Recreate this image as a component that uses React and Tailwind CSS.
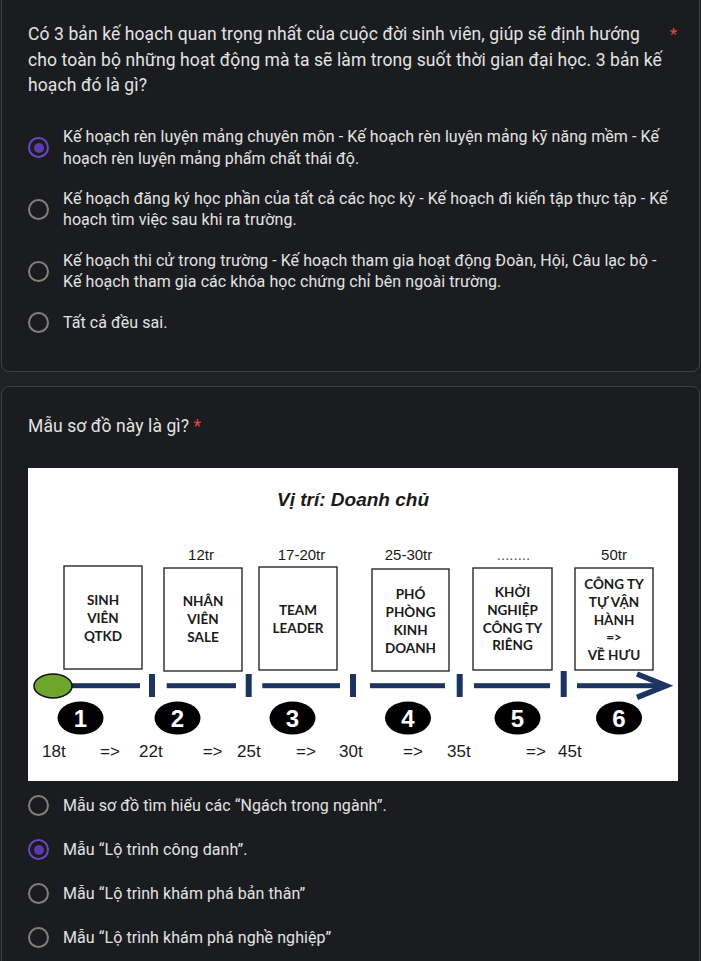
import React from "react";

function Radio({ checked }) {
  if (checked) {
    return (
      <div className="w-[21px] h-[21px] shrink-0 rounded-full border-2 border-[#6b47c2] flex items-center justify-center">
        <div className="w-[10px] h-[10px] rounded-full bg-[#5c3ca9]" />
      </div>
    );
  }
  return <div className="w-[21px] h-[21px] shrink-0 rounded-full border-2 border-[#857f79]" />;
}

const boxes = [
  { x: 36, y: 98, w: 78, h: 103, lines: ["SINH", "VIÊN", "QTKD"], ys: [137, 155, 173] },
  { x: 136, y: 100, w: 78, h: 103, lines: ["NHÂN", "VIÊN", "SALE"], ys: [138, 156, 174] },
  { x: 231, y: 99, w: 78, h: 103, lines: ["TEAM", "LEADER"], ys: [147, 165] },
  { x: 344, y: 101, w: 77, h: 102, lines: ["PHÓ", "PHÒNG", "KINH", "DOANH"], ys: [131, 149, 167, 185] },
  { x: 445, y: 100, w: 79, h: 102, lines: ["KHỞI", "NGHIỆP", "CÔNG TY", "RIÊNG"], ys: [129, 147, 165, 182] },
  { x: 547, y: 100, w: 78, h: 102, lines: ["CÔNG TY", "TỰ VẬN", "HÀNH", "=>", "VỀ HƯU"], ys: [121, 139, 157, 174, 192] },
];

const topLabels = [
  { x: 173, t: "12tr" },
  { x: 273.5, t: "17-20tr" },
  { x: 380.5, t: "25-30tr" },
  { x: 485.5, t: "........" },
  { x: 586, t: "50tr" },
];

const segs = [
  [42, 112],
  [138.7, 208],
  [234.3, 312],
  [342, 417],
  [446, 522],
  [549, 633],
];

const ticks = [121, 217.7, 322, 428.7, 532.7];

const nums = [52.5, 149.5, 264.5, 380, 489.5, 591];

const ages = [
  [14, "18t"],
  [72, "=>"],
  [111, "22t"],
  [174.7, "=>"],
  [209, "25t"],
  [268, "=>"],
  [311, "30t"],
  [375, "=>"],
  [419, "35t"],
  [498, "=>"],
  [530, "45t"],
];

function Diagram() {
  return (
    <svg width="650" height="313" viewBox="0 0 650 313" className="block">
      <rect x="0" y="0" width="650" height="313" fill="#ffffff" />
      <text
        x="325"
        y="38"
        textAnchor="middle"
        fontFamily="'Liberation Sans', Arial, sans-serif"
        fontWeight="700"
        fontStyle="italic"
        fontSize="19"
        fill="#1a1a1a"
      >
        Vị trí: Doanh chủ
      </text>
      {topLabels.map((l, i) => (
        <text
          key={i}
          x={l.x}
          y="91.5"
          textAnchor="middle"
          fontFamily="'Liberation Sans', Arial, sans-serif"
          fontSize="15"
          fill={i === 3 ? "#555555" : "#1a1a1a"}
        >
          {l.t}
        </text>
      ))}
      {boxes.map((b, i) => (
        <g key={i}>
          <rect x={b.x} y={b.y} width={b.w} height={b.h} fill="#ffffff" stroke="#2a2a2a" strokeWidth="1.4" />
          {b.lines.map((ln, j) => (
            <text
              key={j}
              x={b.x + b.w / 2}
              y={b.ys[j]}
              textAnchor="middle"
              fontFamily="Lato, 'Open Sans', sans-serif"
              fontWeight="700"
              fontSize="13.5"
              fill="#1a1a1a"
            >
              {ln}
            </text>
          ))}
        </g>
      ))}
      {segs.map(([a, b], i) => (
        <rect key={i} x={a} y="215.2" width={b - a} height="5" fill="#1b3461" />
      ))}
      {ticks.map((x, i) => (
        <rect key={i} x={x} y={i === 4 ? 203 : 206} width="6" height={i === 4 ? 26 : 23} fill="#1b3461" />
      ))}
      <polyline
        points="609,206 638,217.7 609,229.4"
        fill="none"
        stroke="#1b3461"
        strokeWidth="5.5"
        strokeLinejoin="miter"
      />
      <ellipse cx="25" cy="218" rx="19" ry="12" fill="#6fa52c" stroke="#111111" strokeWidth="1.5" />
      {nums.map((cx, i) => (
        <g key={i}>
          <ellipse cx={cx} cy="250" rx="23" ry="16.5" fill="#000000" />
          <text
            x={cx}
            y="258.5"
            textAnchor="middle"
            fontFamily="'Liberation Sans', Arial, sans-serif"
            fontWeight="700"
            fontSize="24"
            fill="#ffffff"
          >
            {i + 1}
          </text>
        </g>
      ))}
      {ages.map(([x, t], i) => (
        <text
          key={i}
          x={x}
          y="288.8"
          fontFamily="'Liberation Sans', Arial, sans-serif"
          fontSize="17"
          fill="#1a1a1a"
        >
          {t}
        </text>
      ))}
    </svg>
  );
}

function Option({ checked, children, className = "" }) {
  return (
    <div className={"flex items-center gap-[14px] " + className}>
      <Radio checked={checked} />
      <div className="flex-1 text-[16px] leading-[21.4px] tracking-[0.07px] text-[#e3e3e3]">{children}</div>
    </div>
  );
}

export default function App() {
  return (
    <div className="w-[701px] h-[961px] overflow-hidden bg-[#202124] pl-px font-['Roboto','Noto_Sans',sans-serif]">
      <div className="w-[699px] bg-[#1b1c1f] border border-t-0 border-[#3c4043] rounded-b-[8px] pl-[26px] pr-[21px] pt-[22px] pb-[38px]">
        <div className="flex items-start">
          <div className="w-[634px] text-[17.5px] leading-[25.7px] tracking-[0.1px] text-[#e3e3e3]">
            Có 3 bản kế hoạch quan trọng nhất của cuộc đời sinh viên, giúp sẽ định hướng cho toàn bộ những hoạt động mà ta sẽ làm trong suốt thời gian đại học. 3 bản kế hoạch đó là gì?
          </div>
          <div className="ml-auto mr-[1px] text-[17px] leading-[25.7px] text-[#e8453c]">*</div>
        </div>
        <div className="mt-[27px] flex flex-col gap-[19px]">
          <Option checked>
            Kế hoạch rèn luyện mảng chuyên môn - Kế hoạch rèn luyện mảng kỹ năng mềm - Kế hoạch rèn luyện mảng phẩm chất thái độ.
          </Option>
          <Option>
            Kế hoạch đăng ký học phần của tất cả các học kỳ - Kế hoạch đi kiến tập thực tập - Kế hoạch tìm việc sau khi ra trường.
          </Option>
          <Option>
            Kế hoạch thi cử trong trường - Kế hoạch tham gia hoạt động Đoàn, Hội, Câu lạc bộ - Kế hoạch tham gia các khóa học chứng chỉ bên ngoài trường.
          </Option>
          <Option>Tất cả đều sai.</Option>
        </div>
      </div>

      <div className="mt-[14px] w-[699px] bg-[#1b1c1f] border border-[#3c4043] rounded-[8px] pl-[26px] pr-[21px] pt-[27px] pb-[24px]">
        <div className="text-[17.5px] leading-[25.7px] tracking-[0.1px] text-[#e3e3e3]">
          Mẫu sơ đồ này là gì? <span className="text-[#e8453c]">*</span>
        </div>
        <div className="mt-[28px] w-[650px] h-[313px] bg-white">
          <Diagram />
        </div>
        <div className="mt-[3px] flex flex-col">
          <Option className="h-[44px]">Mẫu sơ đồ tìm hiểu các “Ngách trong ngành”.</Option>
          <Option checked className="h-[44px]">Mẫu “Lộ trình công danh”.</Option>
          <Option className="h-[44px]">Mẫu “Lộ trình khám phá bản thân”</Option>
          <Option className="h-[44px]">Mẫu “Lộ trình khám phá nghề nghiệp”</Option>
        </div>
      </div>
    </div>
  );
}
